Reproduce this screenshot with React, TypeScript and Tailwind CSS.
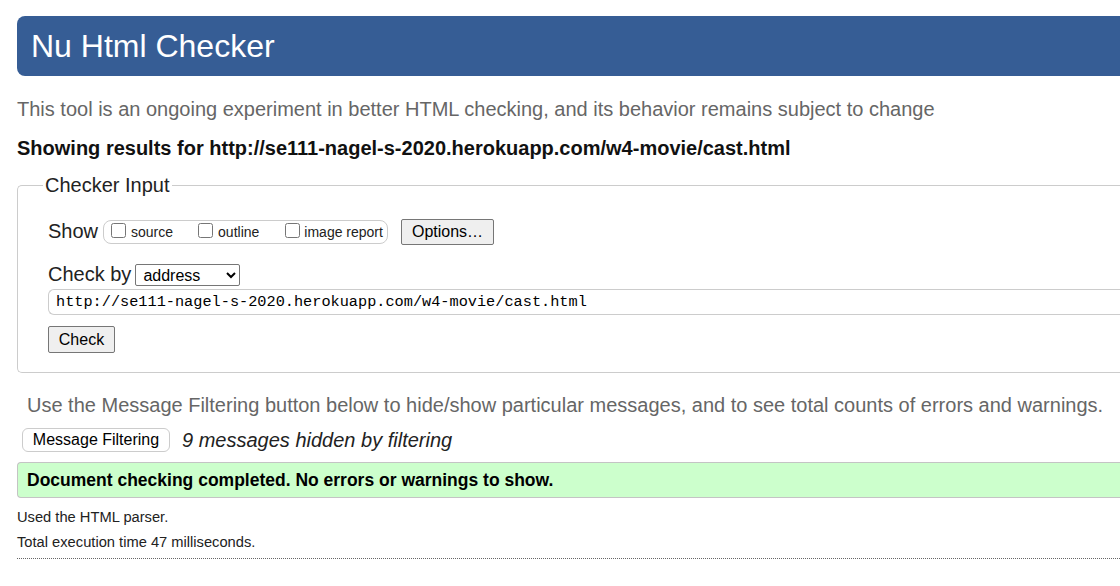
import React from "react";

const URL_TEXT = "http://se111-nagel-s-2020.herokuapp.com/w4-movie/cast.html";

export default function App() {
  return (
    <div className="w-full min-h-[586px] overflow-hidden bg-white text-[#222] font-['Liberation_Sans',Arial,sans-serif]">
      <div className="w-[1180px] pl-[17px] pt-[16px]">
        {/* header */}
        <h1 className="flex h-[60px] items-center rounded-l-[8px] bg-[#365d95] pl-[14px] text-[32px] leading-[36px] text-white">
          Nu Html Checker
        </h1>

        <p className="mt-[21px] text-[20px] leading-[24px] text-[#666]">
          This tool is an ongoing experiment in better HTML checking, and its behavior remains subject to change
        </p>

        <p className="mt-[15px] text-[20px] font-bold leading-[24px] text-[#111]">
          Showing results for {URL_TEXT}
        </p>

        {/* checker input */}
        <fieldset className="mt-[13px] rounded-l-[5px] border border-r-0 border-[#ccc] pb-[19px] pl-[30px] pt-[22px]">
          <legend className="-ml-[5px] px-[2px] text-[20px] leading-[24px] text-[#222]">Checker Input</legend>

          <div className="flex h-[26px] items-center">
            <span className="mt-[-3px] text-[20px] leading-[24px]">Show</span>
            <div className="ml-[5px] flex h-[24px] w-[285px] items-center rounded-[8px] border border-[#ccc] pl-[7px] text-[14px] leading-[16px]">
              <label className="flex items-center">
                <input type="checkbox" className="mt-[-3px] h-[15px] w-[15px]" />
                <span className="ml-[5px]">source</span>
              </label>
              <label className="ml-[25px] flex items-center">
                <input type="checkbox" className="mt-[-3px] h-[15px] w-[15px]" />
                <span className="ml-[5px]">outline</span>
              </label>
              <label className="ml-[26px] flex items-center">
                <input type="checkbox" className="mt-[-3px] h-[15px] w-[15px]" />
                <span className="ml-[4px]">image report</span>
              </label>
            </div>
            <button className="ml-[13px] h-[26px] w-[93px] rounded-[2px] border border-[#767676] bg-[#efefef] text-[16px] leading-[18px] text-black">
              Options…
            </button>
          </div>

          <div className="mt-[18px] flex h-[24px] items-center">
            <span className="mt-[-2px] text-[20px] leading-[24px]">Check by</span>
            <select
              defaultValue="address"
              className="ml-[4px] h-[22px] w-[105px] rounded-[2px] border border-[#767676] bg-white pl-[3px] text-[16px] leading-[18px] text-black"
            >
              <option value="address">address</option>
              <option value="file">file upload</option>
              <option value="text">text input</option>
            </select>
          </div>

          <div className="mt-[2px] flex h-[26px] items-center rounded-l-[6px] border border-r-0 border-[#ccc] pl-[7px] font-['Liberation_Mono','DejaVu_Sans_Mono',monospace] text-[15.25px] leading-[18px] text-black">
            {URL_TEXT}
          </div>

          <button className="mt-[11px] block h-[27px] w-[67px] rounded-[2px] border border-[#767676] bg-[#efefef] text-[16px] leading-[18px] text-black">
            Check
          </button>
        </fieldset>

        <p className="ml-[10px] mt-[20px] text-[20px] leading-[24px] text-[#666]">
          Use the Message Filtering button below to hide/show particular messages, and to see total counts of errors and warnings.
        </p>

        <div className="ml-[5px] mt-[11px] flex h-[24px] items-center">
          <button className="h-[24px] w-[148px] rounded-[6px] border border-[#ccc] bg-white text-[16px] leading-[18px] text-black">
            Message Filtering
          </button>
          <span className="ml-[12px] text-[20px] italic leading-[24px] text-[#222]">9 messages hidden by filtering</span>
        </div>

        <div className="mt-[10px] flex h-[36px] items-center rounded-l-[4px] border border-r-0 border-[#c4c4c4] bg-[#ccffcc] pl-[9px] text-[17.5px] font-bold leading-[20px] text-black">
          Document checking completed. No errors or warnings to show.
        </div>

        <p className="mt-[11px] text-[14.7px] leading-[16px] text-[#222]">Used the HTML parser.</p>
        <p className="mt-[9px] text-[14.7px] leading-[16px] text-[#222]">Total execution time 47 milliseconds.</p>

        <hr className="mt-[8px] border-0 border-t border-dotted border-[#666]" />
      </div>
    </div>
  );
}
